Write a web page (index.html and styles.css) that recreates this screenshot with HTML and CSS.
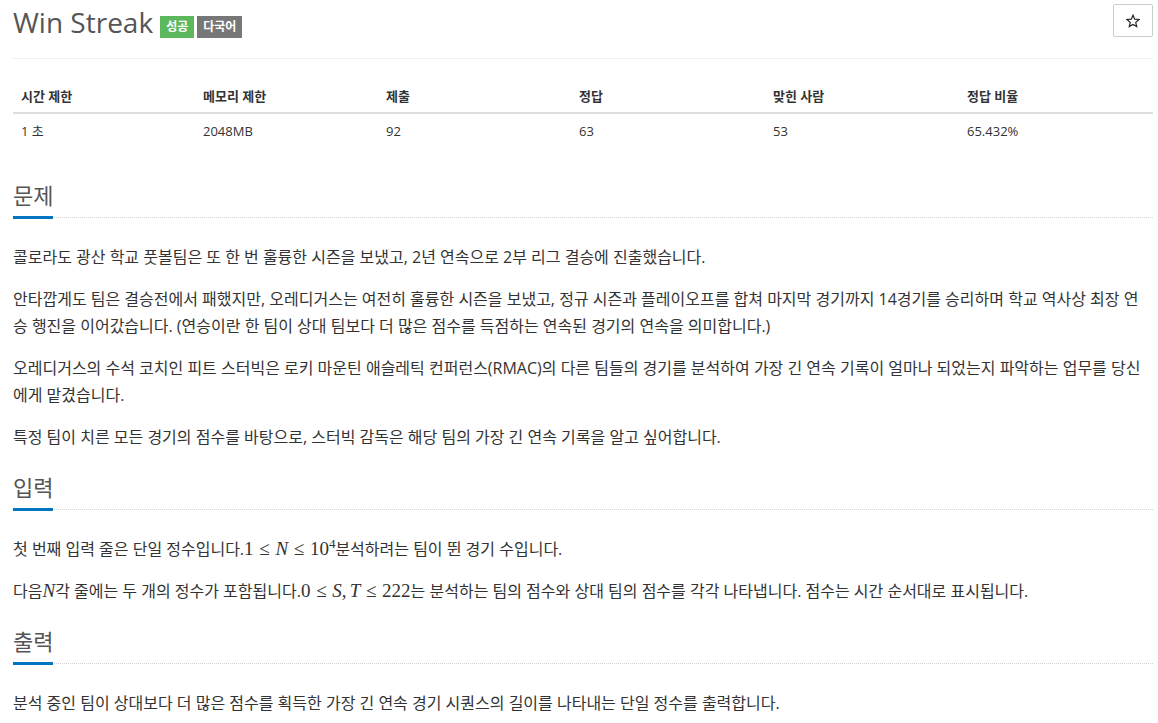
FILE: index.html
```html
<!DOCTYPE html>
<html lang="ko">
<head>
  <meta charset="UTF-8" />
  <meta name="viewport" content="width=device-width, initial-scale=1" />
  <title>Win Streak</title>
  <link rel="stylesheet" href="styles.css">
</head>
<body>
  <div class="page">
    <div class="page-header">
      <h1 class="title">
        <span class="title-text">Win Streak</span>
        <span class="label label-ok">성공</span>
        <span class="label label-lang">다국어</span>
      </h1>
      <button class="star-btn" aria-label="즐겨찾기">
        <svg width="14" height="14" viewBox="0 0 24 24"><polygon points="12,2 14.9,8.9 22.3,9.5 16.7,14.4 18.4,21.6 12,17.8 5.6,21.6 7.3,14.4 1.7,9.5 9.1,8.9" fill="none" stroke="#222" stroke-width="2" stroke-linejoin="miter"/></svg>
      </button>
    </div>

    <table class="info">
      <thead>
        <tr>
          <th>시간 제한</th>
          <th>메모리 제한</th>
          <th>제출</th>
          <th>정답</th>
          <th>맞힌 사람</th>
          <th>정답 비율</th>
        </tr>
      </thead>
      <tbody>
        <tr>
          <td>1 초</td>
          <td>2048MB</td>
          <td>92</td>
          <td>63</td>
          <td>53</td>
          <td>65.432%</td>
        </tr>
      </tbody>
    </table>

    <!-- 문제 -->
    <section class="problem-section">
      <h2 class="headline"><span>문제</span></h2>
      <div class="problem-text">
        <p>콜로라도 광산 학교 풋볼팀은 또 한 번 훌륭한 시즌을 보냈고, 2년 연속으로 2부 리그 결승에 진출했습니다.</p>
        <p>안타깝게도 팀은 결승전에서 패했지만, 오레디거스는 여전히 훌륭한 시즌을 보냈고, 정규 시즌과 플레이오프를 합쳐 마지막 경기까지 14경기를 승리하며 학교 역사상 최장 연승 행진을 이어갔습니다. (연승이란 한 팀이 상대 팀보다 더 많은 점수를 득점하는 연속된 경기의 연속을 의미합니다.)</p>
        <p>오레디거스의 수석 코치인 피트 스터빅은 로키 마운틴 애슬레틱 컨퍼런스(RMAC)의 다른 팀들의 경기를 분석하여 가장 긴 연속 기록이 얼마나 되었는지 파악하는 업무를 당신에게 맡겼습니다.</p>
        <p>특정 팀이 치른 모든 경기의 점수를 바탕으로, 스터빅 감독은 해당 팀의 가장 긴 연속 기록을 알고 싶어합니다.</p>
      </div>
    </section>

    <!-- 입력 -->
    <section class="problem-section">
      <h2 class="headline"><span>입력</span></h2>
      <div class="problem-text">
        <p>첫 번째 입력 줄은 단일 정수입니다.<span class="math">1<span class="rel">≤</span><i>N</i><span class="rel">≤</span>10<sup>4</sup></span>분석하려는 팀이 뛴 경기 수입니다.</p>
        <p>다음<span class="math"><i>N</i></span>각 줄에는 두 개의 정수가 포함됩니다.<span class="math">0<span class="rel">≤</span><i>S</i><span class="comma">,</span><i>T</i><span class="rel">≤</span>222</span>는 분석하는 팀의 점수와 상대 팀의 점수를 각각 나타냅니다. 점수는 시간 순서대로 표시됩니다.</p>
      </div>
    </section>

    <!-- 출력 -->
    <section class="problem-section">
      <h2 class="headline"><span>출력</span></h2>
      <div class="problem-text">
        <p>분석 중인 팀이 상대보다 더 많은 점수를 획득한 가장 긴 연속 경기 시퀀스의 길이를 나타내는 단일 정수를 출력합니다.</p>
      </div>
    </section>
  </div>
</body>
</html>
```

FILE: styles.css
```css
*, *::before, *::after { box-sizing: border-box; }
body {
  margin: 0;
  font-family: 'Open Sans', 'Noto Sans CJK KR', sans-serif;
  color: #333;
  background: #fff;
}
.page {
  padding: 0 5px 0 13px;
}

/* 제목 */
.page-header {
  display: flex;
  justify-content: space-between;
  align-items: flex-start;
  height: 59px;
  padding-top: 4px;
  border-bottom: 1px solid #eee;
}
.title {
  margin: 0;
  display: flex;
  align-items: flex-end;
  font-size: 28px;
  font-weight: 400;
  line-height: 36px;
  color: #555;
}
.title-text {
  margin-right: 7px;
}
.label {
  display: inline-block;
  height: 22px;
  line-height: 22px;
  padding: 0 6px;
  margin: 0 3px 2px 0;
  font-size: 12px;
  font-weight: bold;
  color: #fff;
}
.label-ok { background-color: #5cb85c; }
.label-lang { background-color: #777; }
.star-btn {
  display: flex;
  align-items: center;
  justify-content: center;
  width: 40px;
  height: 33px;
  padding: 0;
  border: 1px solid #ccc;
  border-radius: 2px;
  background: #fff;
  cursor: pointer;
}

/* 정보 표 */
.info {
  width: 100%;
  margin: 19px 0 32px;
  border-collapse: collapse;
  table-layout: fixed;
  font-size: 13px;
}
.info th {
  text-align: left;
  padding: 8px 8px 6px;
  line-height: 20px;
  font-weight: bold;
  border-bottom: 2px solid #ddd;
}
.info td {
  padding: 7px 8px;
  line-height: 20px;
}
.info th:nth-child(1) { width: 182px; }
.info th:nth-child(2) { width: 183px; }
.info th:nth-child(3) { width: 193px; }
.info th:nth-child(4) { width: 194px; }
.info th:nth-child(5) { width: 194px; }

/* 본문 */
.problem-section + .problem-section {
  margin-top: 21px;
}
.headline {
  margin: 0;
  font-size: 22px;
  font-weight: 400;
  line-height: 30px;
  color: #555;
  border-bottom: 1px dotted #d4d4d4;
}
.headline span {
  display: inline-block;
  padding-bottom: 6px;
  border-bottom: 3px solid #0076c0;
  margin-bottom: -2px;
}
.problem-text {
  margin-top: 26px;
}
.problem-text p {
  margin: 0 0 14px;
  font-size: 16px;
  line-height: 27.5px;
}
.math {
  font-family: 'Liberation Serif', serif;
  font-size: 19px;
  line-height: 1;
}
.math i {
  font-style: italic;
}
.math .rel {
  margin: 0 0.3em;
}
.math .comma {
  margin-right: 0.17em;
}
.math sup {
  font-size: 13px;
  line-height: 0;
}
```
